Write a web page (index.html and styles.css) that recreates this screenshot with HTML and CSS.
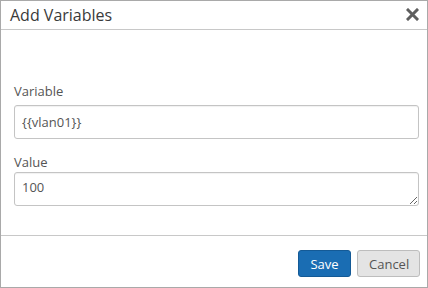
FILE: index.html
```html
<!DOCTYPE html>
<html lang="en">
<head>
  <meta charset="UTF-8" />
  <title>Add Variables</title>
  <link rel="stylesheet" href="styles.css">
</head>
<body>
  <div class="dialog">
    <div class="dialog-header">
      <h1>Add Variables</h1>
      <button class="close-btn" title="Close">
        <svg width="13" height="13" viewBox="0 0 13 13">
          <path d="M2 2 L11 11 M11 2 L2 11" stroke="#5e5e5e" stroke-width="3" stroke-linecap="square" />
        </svg>
      </button>
    </div>

    <div class="dialog-body">
      <div class="field">
        <label for="variable">Variable</label>
        <input type="text" id="variable" value="{{vlan01}}" />
      </div>
      <div class="field">
        <label for="value">Value</label>
        <textarea id="value" rows="1">100</textarea>
      </div>
    </div>

    <div class="dialog-footer">
      <button class="btn btn-primary">Save</button>
      <button class="btn btn-default">Cancel</button>
    </div>
  </div>
</body>
</html>
```

FILE: styles.css
```css
* {
  box-sizing: border-box;
}
body {
  margin: 0;
  font-family: "Open Sans", Arial, sans-serif;
  font-size: 13px;
  color: #444;
  background: #fff;
}
.dialog {
  width: 428px;
  height: 288px;
  border: 1px solid #a9a9a9;
  display: flex;
  flex-direction: column;
}
.dialog-header {
  height: 29px;
  border-bottom: 1px solid #c8c8c8;
  display: flex;
  align-items: center;
  justify-content: space-between;
  padding: 0 8px 0 9px;
}
.dialog-header h1 {
  margin: 0;
  font-size: 16px;
  font-weight: normal;
  color: #3a3a3a;
  line-height: 22px;
}
.close-btn {
  border: none;
  background: none;
  padding: 0;
  width: 13px;
  height: 13px;
  cursor: pointer;
  display: flex;
  margin-top: -1px;
}
.dialog-body {
  flex: 1;
  padding: 52px 8px 0 13px;
  border-bottom: 1px solid #c8c8c8;
}
.field label {
  display: block;
  line-height: 18px;
  color: #555;
  margin-bottom: 5px;
}
.field + .field {
  margin-top: 14px;
}
.field + .field label {
  margin-bottom: 1px;
}
.field input, .field textarea {
  display: block;
  width: 100%;
  height: 34px;
  padding: 6px 7px;
  border: 1px solid #c4c4c4;
  border-radius: 3px;
  box-shadow: inset 0 1px 1px rgba(0, 0, 0, 0.06);
  font-family: inherit;
  font-size: 13px;
  line-height: 18px;
  color: #555;
  background: #fff;
}
.field textarea {
  resize: vertical;
  padding-top: 5px;
}
.dialog-footer {
  height: 51px;
  display: flex;
  justify-content: flex-end;
  align-items: flex-start;
  gap: 6px;
  padding: 14px 7px 0 0;
}
.btn {
  height: 27px;
  padding: 0 11px;
  border-radius: 3px;
  font-family: inherit;
  font-size: 13px;
  cursor: pointer;
}
.btn-primary {
  background: #1a6db3;
  border: 1px solid #145a96;
  color: #fff;
  width: 53px;
}
.btn-default {
  background: #e4e4e4;
  border: 1px solid #bdbdbd;
  color: #555;
  width: 63px;
}
```
